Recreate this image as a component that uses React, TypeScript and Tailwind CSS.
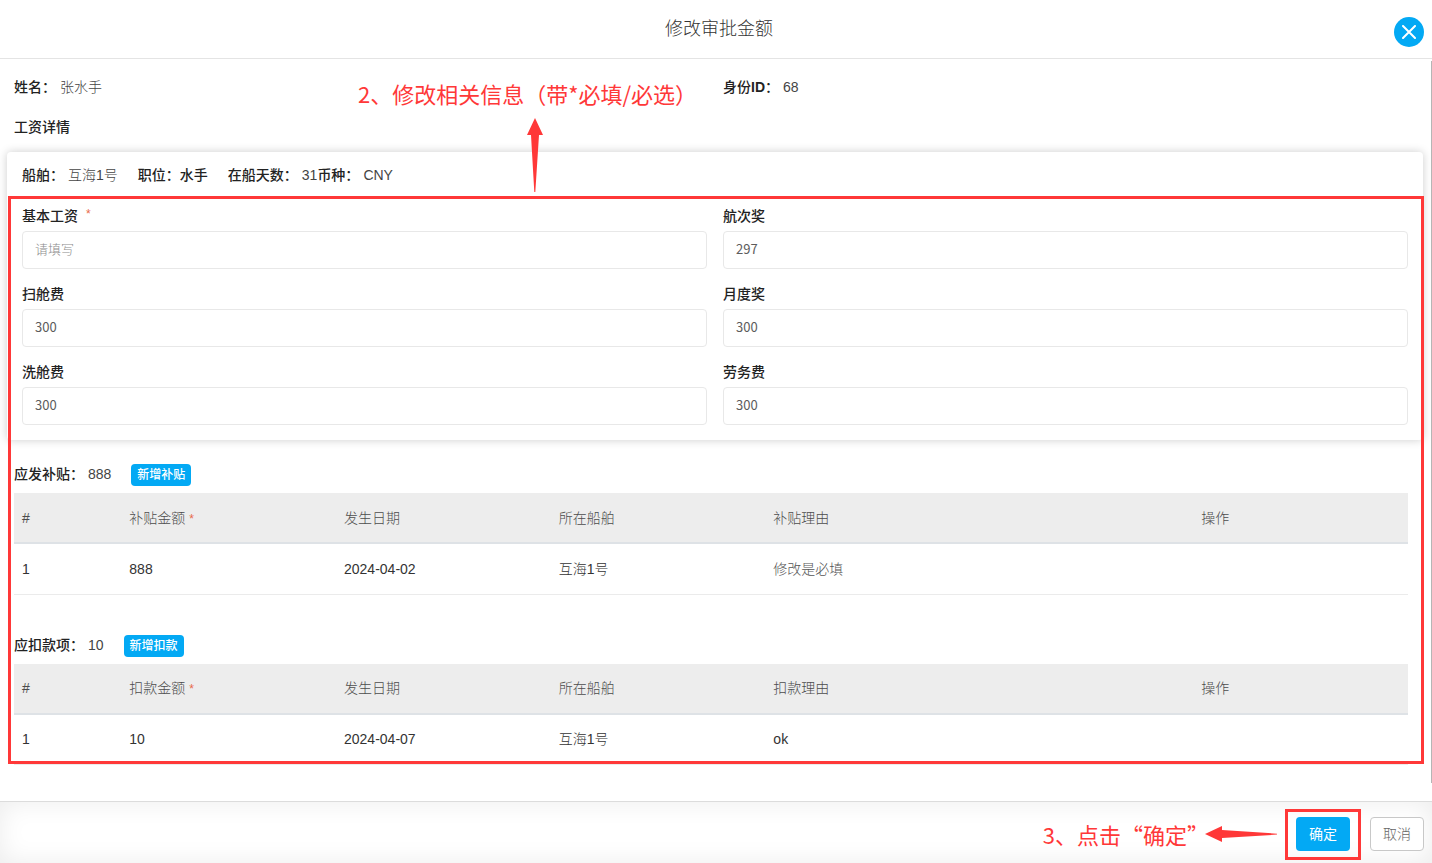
import { useState } from "react";
import type { ReactNode } from "react";

type Field = { id: string; label: string; value: string; required?: boolean };

type Item = {
  amount: string;
  date: string;
  ship: string;
  reason: string;
  reasonClass: string;
};

const FIELDS: Field[] = [
  { id: "base", label: "基本工资", value: "", required: true },
  { id: "voyage", label: "航次奖", value: "297" },
  { id: "sweep", label: "扫舱费", value: "300" },
  { id: "monthly", label: "月度奖", value: "300" },
  { id: "wash", label: "洗舱费", value: "300" },
  { id: "labour", label: "劳务费", value: "300" },
];

const SUBSIDIES: Item[] = [
  { amount: "888", date: "2024-04-02", ship: "互海1号", reason: "修改是必填", reasonClass: "text-[#555]" },
];

const DEDUCTIONS: Item[] = [
  { amount: "10", date: "2024-04-07", ship: "互海1号", reason: "ok", reasonClass: "text-[#333]" },
];

function Star() {
  return <span className="text-xs text-[#e8694a]">*</span>;
}

function Pair({ label, value }: { label: ReactNode; value: string }) {
  return (
    <div className="flex gap-1">
      <span className="font-medium text-[#222]">{label}</span>
      <span className="font-light">{value}</span>
    </div>
  );
}

function SalaryField({ field }: { field: Field }) {
  const [value, setValue] = useState(field.value);
  return (
    <div className="flex flex-col gap-[5px]">
      <label htmlFor={field.id} className="flex gap-2 leading-5 font-medium text-[#222]">
        {field.label}
        {field.required && <Star />}
      </label>
      <input
        id={field.id}
        type="text"
        placeholder="请填写"
        value={value}
        onChange={(e) => setValue(e.target.value)}
        className="h-[38px] w-full rounded border border-[#e8e8e8] bg-white px-3 pb-[3px] font-['Noto_Sans_CJK_SC',sans-serif] text-[13px] text-[#5c5c5c] outline-none placeholder:font-light placeholder:text-[#8c8c8c]"
      />
    </div>
  );
}

function ItemSection(props: {
  title: string;
  total: string;
  action: string;
  amountHead: string;
  reasonHead: string;
  items: Item[];
}) {
  const cell = "px-2 text-left";
  return (
    <section className="flex flex-col gap-[7px]">
      <div className="flex h-[22px] gap-5">
        <div className="leading-5">
          <Pair label={props.title} value={props.total} />
        </div>
        <button type="button" className="h-[22px] rounded bg-[#03a9f4] px-[6px] text-xs font-medium text-white">
          {props.action}
        </button>
      </div>
      <table className="w-full table-fixed border-collapse">
        <colgroup>
          <col className="w-[7.7%]" />
          <col className="w-[15.4%]" />
          <col className="w-[15.4%]" />
          <col className="w-[15.4%]" />
          <col className="w-[30.7%]" />
          <col className="w-[15.4%]" />
        </colgroup>
        <thead>
          <tr className="h-[50px] border-b-2 border-[#dee2e6] bg-[#ededed] text-[#4c4c4c] *:font-light">
            <th className={cell}>#</th>
            <th className={cell}>
              {props.amountHead} <Star />
            </th>
            <th className={cell}>发生日期</th>
            <th className={cell}>所在船舶</th>
            <th className={cell}>{props.reasonHead}</th>
            <th className={cell}>操作</th>
          </tr>
        </thead>
        <tbody>
          {props.items.map((item, i) => (
            <tr key={item.date} className="h-[51px] border-b border-[#ebebeb] font-light text-[#333]">
              <td className={cell}>{i + 1}</td>
              <td className={cell}>{item.amount}</td>
              <td className={cell}>{item.date}</td>
              <td className={cell}>{item.ship}</td>
              <td className={`px-2 text-left ${item.reasonClass}`}>{item.reason}</td>
              <td className={cell} />
            </tr>
          ))}
        </tbody>
      </table>
    </section>
  );
}

export default function App() {
  return (
    <div className="flex min-h-screen flex-col bg-white font-['Liberation_Sans','Noto_Sans_CJK_SC',sans-serif] text-sm text-[#444]">
      <header className="relative flex h-[59px] justify-center border-b border-[#e4e4e4] pt-[15px] pl-[6px]">
        <h1 className="text-lg leading-7 font-light text-[#333]">修改审批金额</h1>
        <button
          type="button"
          aria-label="关闭"
          className="absolute top-[17px] right-2 flex size-[30px] items-center justify-center rounded-full bg-[#03a9f4]"
        >
          <svg viewBox="0 0 14 14" className="size-[14px]" fill="none" stroke="#fff" strokeWidth="2" strokeLinecap="round">
            <path d="M1 1 13 13M13 1 1 13" />
          </svg>
        </button>
      </header>

      <main className="relative flex-1 pt-2">
        <div className="grid grid-cols-2 gap-x-4 pr-4 pl-[14px] leading-10">
          <Pair label="姓名：" value="张水手" />
          <Pair
            label={
              <>
                身份<span className="font-bold">ID</span>：
              </>
            }
            value="68"
          />
          <h2 className="font-medium text-[#222]">工资详情</h2>
        </div>

        <section className="mt-[5px] mr-[9px] ml-[7px] rounded-sm bg-white px-[15px] pt-[13px] pb-[15px] shadow-[0_0_10px_rgba(0,0,0,0.2)]">
          <div className="flex gap-5 leading-5">
            <Pair label="船舶：" value="互海1号" />
            <span className="font-medium text-[#222]">职位：水手</span>
            <div className="flex">
              <Pair label="在船天数：" value="31" />
              <Pair label="币种：" value="CNY" />
            </div>
          </div>
          <div className="mt-[21px] grid grid-cols-2 gap-x-4 gap-y-[15px]">
            {FIELDS.map((f) => (
              <SalaryField key={f.id} field={f} />
            ))}
          </div>
        </section>

        <div className="mt-6 mr-6 mb-8 ml-[14px] flex flex-col gap-10">
          <ItemSection
            title="应发补贴："
            total="888"
            action="新增补贴"
            amountHead="补贴金额"
            reasonHead="补贴理由"
            items={SUBSIDIES}
          />
          <ItemSection
            title="应扣款项："
            total="10"
            action="新增扣款"
            amountHead="扣款金额"
            reasonHead="扣款理由"
            items={DEDUCTIONS}
          />
        </div>

        {/* scroll thumb */}
        <div className="absolute top-[2px] right-0 bottom-[18px] w-px bg-[#b5b5b5]" />

        {/* guide frame and note for step 2 */}
        <div className="pointer-events-none absolute top-[137px] right-2 bottom-[37px] left-2 border-3 border-[#ff3838]" />
        <p className="pointer-events-none absolute top-[18px] left-[358px] font-['Noto_Sans_CJK_SC',sans-serif] text-[22px] leading-8 whitespace-nowrap text-[#ff3838]">
          2、修改相关信息（带*必填/必选）
        </p>
        <svg viewBox="0 0 16 74" className="pointer-events-none absolute top-[59px] left-[527px] h-[74px] w-4" fill="#ff3838">
          <path d="M8 0 16 17H12L8.300 74H7.300L4 17H0Z" />
        </svg>
      </main>

      <footer className="flex h-[62px] items-center justify-end border-t border-[#dcdcdc] pt-[3px] pr-2 shadow-[inset_0_0_26px_rgba(0,0,0,0.08)]">
        <p className="-mr-1 font-['Noto_Sans_CJK_SC',sans-serif] text-[22px] leading-8 whitespace-nowrap text-[#ff3838]">
          3、点击“确定”
        </p>
        <svg viewBox="0 0 72 16" className="mr-2 h-4 w-[72px]" fill="#ff3838">
          <path d="M0 8 17 0V4L72 7.700V8.600L17 12V16Z" />
        </svg>
        <div className="flex h-[51px] items-center border-3 border-[#ff3838] px-2">
          <button type="button" className="h-[34px] rounded bg-[#03a9f4] px-[13px] text-white">
            确定
          </button>
        </div>
        <button type="button" className="ml-[9px] h-[34px] rounded border border-[#c8c8c8] bg-white px-3 font-light text-[#666]">
          取消
        </button>
      </footer>
    </div>
  );
}
